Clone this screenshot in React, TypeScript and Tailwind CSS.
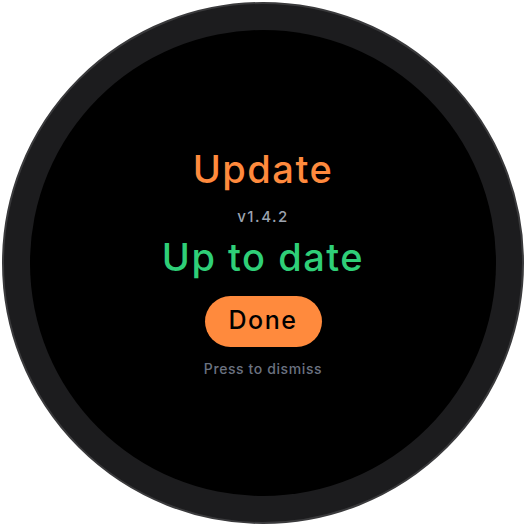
export default function App() {
  return (
    <div className="w-[526px] h-[526px] bg-white flex items-center justify-center" style={{ fontFamily: 'Inter, "Noto Sans", sans-serif' }}>
      <div className="w-[522px] h-[522px] rounded-full bg-[#1c1c1e] border-2 border-[#3a3a3c] flex items-center justify-center">
        <div className="w-[466px] h-[466px] rounded-full bg-black flex flex-col items-center justify-center">
          <div className="text-[38px] leading-[40px] font-medium text-[#ff8a3d] tracking-[1.5px]">Update</div>
          <div className="mt-[18px] text-[15px] leading-[20px] font-medium text-[#9ca3af] tracking-[1.5px]">v1.4.2</div>
          <div className="mt-[8px] text-[38px] leading-[44px] font-medium text-[#2fcf78] tracking-[1.5px]">Up to date</div>
          <div className="mt-[17px] w-[117px] h-[51px] rounded-full bg-[#ff8a3d] flex items-center justify-center text-[25px] font-medium text-black tracking-[1.5px]">Done</div>
          <div className="mt-[13px] text-[14px] leading-[18px] font-medium text-[#6b7280] tracking-[0.6px]">Press to dismiss</div>
        </div>
      </div>
    </div>
  );
}
